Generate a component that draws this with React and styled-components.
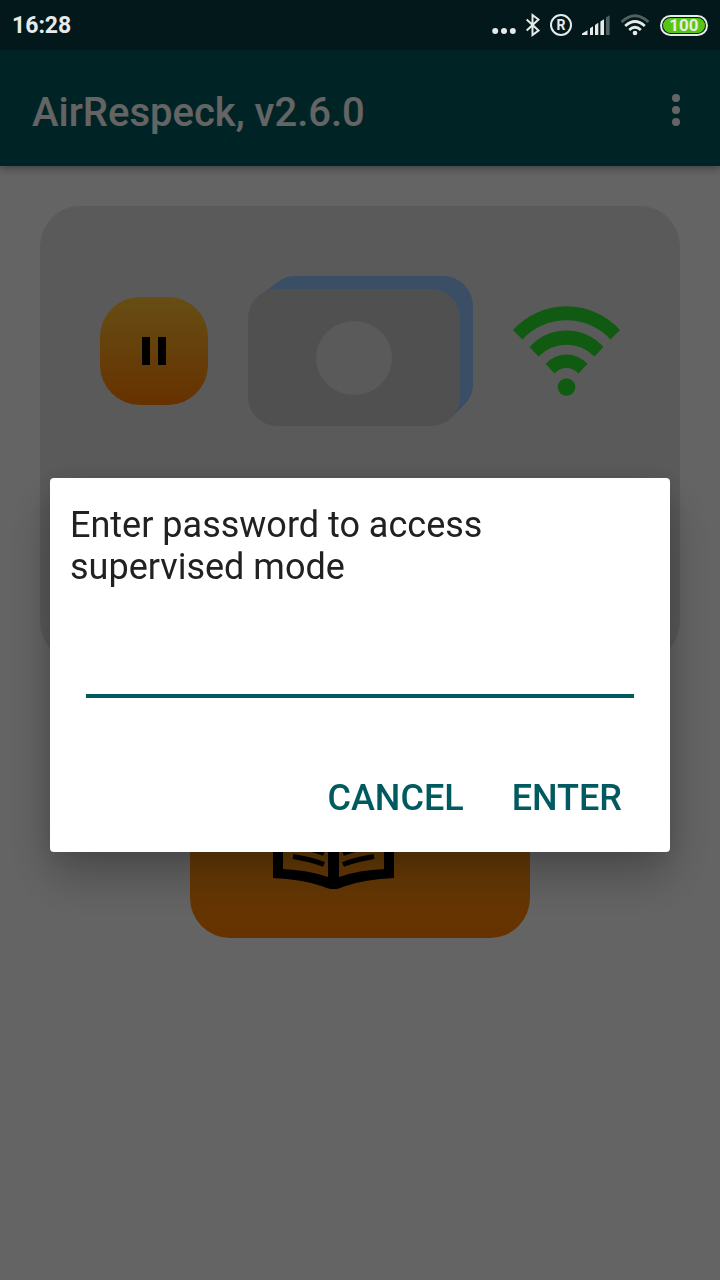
import React from "react";
import styled, { createGlobalStyle } from "styled-components";

const GlobalStyle = createGlobalStyle`
  *, *::before, *::after { box-sizing: border-box; }
  html, body { margin: 0; padding: 0; }
  body { background: #fafafa; font-family: Roboto, sans-serif; }
  button { font-family: inherit; border: 0; padding: 0; cursor: pointer; }
  svg { display: block; flex: none; }
`;

const Page = styled.div`
  min-height: 100vh;
  display: flex;
  flex-direction: column;
  background: #fafafa;
`;

const StatusBar = styled.div`
  position: relative;
  z-index: 3;
  height: 50px;
  padding: 0 12px;
  display: flex;
  align-items: center;
  justify-content: space-between;
  background: #02181a;
  color: #e6eaea;
`;

const Clock = styled.span`
  font-size: 23px;
  line-height: 28px;
  font-weight: 700;
  padding-top: 2px;
`;

const StatusIcons = styled.div`
  display: flex;
  align-items: center;
  gap: 10px;
`;

const Roaming = styled.span`
  width: 22px;
  height: 22px;
  border: 2px solid #e6eaea;
  border-radius: 50%;
  display: flex;
  align-items: center;
  justify-content: center;
  font-size: 14px;
  line-height: 18px;
  font-weight: 700;
`;

const Battery = styled.span`
  width: 48px;
  height: 21px;
  border: 2px solid #e6eaea;
  border-radius: 11px;
  padding: 1px;
  display: flex;
`;

const BatteryLevel = styled.span`
  flex: 1;
  border-radius: 8px;
  background: #56c614;
  display: flex;
  align-items: center;
  justify-content: center;
  font-size: 17px;
  line-height: 15px;
  font-weight: 700;
`;

const AppBar = styled.header`
  height: 116px;
  padding: 0 32px;
  display: flex;
  align-items: center;
  justify-content: space-between;
  background: #005a60;
  color: #fafafa;
  box-shadow: 0 2px 8px rgba(0, 0, 0, 0.4);
`;

const AppTitle = styled.h1`
  margin: 0;
  padding-top: 10px;
  font-size: 40px;
  line-height: 48px;
  font-weight: 500;
`;

const MenuButton = styled.button`
  width: 24px;
  height: 48px;
  display: flex;
  flex-direction: column;
  align-items: center;
  justify-content: center;
  background: none;
  gap: 4px;
  && { padding-top: 4px; }
`;

const MenuDot = styled.span`
  width: 8px;
  height: 8px;
  border-radius: 50%;
  background: #fafafa;
`;

const Content = styled.main`
  padding: 40px;
  display: flex;
  flex-direction: column;
  align-items: center;
  gap: 40px;
`;

const Card = styled.section`
  width: 100%;
  min-height: 456px;
  padding: 70px 20px;
  border-radius: 40px;
  background: #e1e1e1;
`;

const DeviceRow = styled.div`
  display: flex;
  align-items: center;
  justify-content: center;
  gap: 40px;
`;

const OrangeButton = styled.button`
  display: flex;
  align-items: center;
  justify-content: center;
  border-radius: 40px;
  background: linear-gradient(#ffc233, #ff7d00);
`;

const PauseButton = styled(OrangeButton)`
  width: 108px;
  height: 108px;
  gap: 8px;
`;

const PauseBar = styled.span`
  width: 8px;
  height: 28px;
  background: #000;
`;

const DiaryButton = styled(OrangeButton)`
  width: 340px;
  height: 236px;
  padding: 0 54px 49px 0;
  align-items: flex-end;
`;

const Scrim = styled.div`
  position: fixed;
  inset: 0;
  z-index: 2;
  padding: 50px 50px 0;
  display: flex;
  align-items: center;
  background: rgba(0, 0, 0, 0.6);
`;

const Dialog = styled.form`
  width: 100%;
  padding: 26px 20px 18px;
  display: flex;
  flex-direction: column;
  border-radius: 4px;
  background: #fff;
  box-shadow: 0 24px 48px rgba(0, 0, 0, 0.26), 0 4px 24px rgba(0, 0, 0, 0.12);
`;

const DialogTitle = styled.label`
  font-size: 36px;
  line-height: 42px;
  color: #212121;
`;

const PasswordInput = styled.input`
  height: 70px;
  margin: 40px 16px 0;
  padding: 0;
  border: 0;
  border-bottom: 4px solid #005a60;
  border-radius: 0;
  outline: none;
  background: transparent;
  font-family: inherit;
  font-size: 36px;
  color: #212121;
`;

const Actions = styled.div`
  margin-top: 64px;
  display: flex;
  justify-content: flex-end;
  gap: 16px;
  padding-right: 12px;
`;

const ActionButton = styled.button`
  height: 72px;
  && { padding: 0 16px; }
  background: none;
  color: #005a60;
  font-size: 36px;
  line-height: 42px;
  font-weight: 500;
`;

const MoreIcon = () => (
  <svg width="24" height="22" viewBox="0 0 24 22" fill="#e6eaea">
    <circle cx="3.200" cy="17" r="3" />
    <circle cx="12" cy="17" r="3" />
    <circle cx="20.800" cy="17" r="3" />
  </svg>
);

const BluetoothIcon = () => (
  <svg width="14" height="24" viewBox="0 0 14 24" fill="none" stroke="#e6eaea" strokeWidth="2">
    <path d="M0.700 6.500 L12.500 17.500 L6.500 22 V2 L12.500 6.500 L0.700 17.500" />
  </svg>
);

const SignalIcon = () => (
  <svg width="28" height="20" viewBox="0 0 28 20" fill="#e6eaea">
    <path d="M0 20 V18.500 L5.500 15.200 V20Z" />
    <path d="M8 20 V13.200 L11 11.200 V20Z" />
    <path d="M13 20 V10 L16.300 7.800 V20Z" />
    <path d="M18.400 20 V6.600 L22 4.200 V20Z" />
    <path d="M24 20 V2.600 L27.600 0.200 V20Z" opacity="0.35" />
  </svg>
);

const WifiStatusIcon = () => (
  <svg width="30" height="22" viewBox="0 0 30 22" fill="none" stroke="#e6eaea" strokeWidth="2.800">
    <path d="M1.500 8 Q15 -4.600 28.500 8" opacity="0.35" />
    <path d="M5.200 12 Q15 3 24.800 12" />
    <path d="M9.200 16 Q15 10.600 20.800 16" />
    <circle cx="15" cy="19" r="2.300" fill="#e6eaea" stroke="none" />
  </svg>
);

const DeviceIcon = () => (
  <svg width="225" height="150" viewBox="0 0 225 150">
    <path
      d="M11 20 L33.700 3.300 Q39 0 45 0 H195 A30 30 0 0 1 225 30 V109 Q225 120 217 128 L199 146 L180 120 L40 40Z"
      fill="#91c5ff"
    />
    <rect x="0" y="13" width="212" height="137" rx="29" fill="#c8c8c8" />
    <ellipse cx="106" cy="82" rx="38" ry="37" fill="#e1e1e1" />
  </svg>
);

const WifiIcon = () => (
  <svg width="107" height="90" viewBox="0 0 107 90" fill="#2be22b">
    <path d="M0 24 A72 72 0 0 1 107 24 L97.500 33.500 A60 60 0 0 0 9.500 33.500Z" />
    <path d="M16.500 41 A49.500 49.500 0 0 1 90.500 41 L81.500 50.500 A39 39 0 0 0 25.500 50.500Z" />
    <path d="M32.500 57.700 A28.500 28.500 0 0 1 74.500 57.700 L65.500 67.500 A16 16 0 0 0 41.500 67.500Z" />
    <circle cx="53.500" cy="81" r="8.800" />
  </svg>
);

const BookIcon = () => (
  <svg width="121" height="108" viewBox="0 0 121 108">
    <path
      fillRule="evenodd"
      d="M0 0 Q36 1 60.500 12 Q85 1 121 0 V97 Q92 98 71 105.500 Q60.500 111 50 105.500 Q29 98 0 97Z
         M10 10 V88 Q35 89 55 96 V21 Q35 12 10 10Z
         M111 10 Q86 12 66 21 V96 Q86 89 111 88Z"
    />
    {[32, 43, 54, 65, 76].map((y) => (
      <g key={y} fill="none" stroke="#000" strokeWidth="5">
        <path d={`M20 ${y - 0.5} Q37 ${y + 2} 51 ${y + 7.5}`} />
        <path d={`M101 ${y - 0.5} Q84 ${y + 2} 70 ${y + 7.5}`} />
      </g>
    ))}
  </svg>
);

export default function App() {
  return (
    <Page>
      <GlobalStyle />
      <StatusBar>
        <Clock>16:28</Clock>
        <StatusIcons>
          <MoreIcon />
          <BluetoothIcon />
          <Roaming>R</Roaming>
          <SignalIcon />
          <WifiStatusIcon />
          <Battery>
            <BatteryLevel>100</BatteryLevel>
          </Battery>
        </StatusIcons>
      </StatusBar>
      <AppBar>
        <AppTitle>AirRespeck, v2.6.0</AppTitle>
        <MenuButton type="button" aria-label="More options">
          <MenuDot />
          <MenuDot />
          <MenuDot />
        </MenuButton>
      </AppBar>
      <Content>
        <Card>
          <DeviceRow>
            <PauseButton type="button" aria-label="Pause">
              <PauseBar />
              <PauseBar />
            </PauseButton>
            <DeviceIcon />
            <WifiIcon />
          </DeviceRow>
        </Card>
        <DiaryButton type="button" aria-label="Diary">
          <BookIcon />
        </DiaryButton>
      </Content>
      <Scrim>
        <Dialog role="dialog" aria-modal="true" onSubmit={(e) => e.preventDefault()}>
          <DialogTitle htmlFor="password">Enter password to access supervised mode</DialogTitle>
          <PasswordInput id="password" type="password" autoComplete="off" />
          <Actions>
            <ActionButton type="button">CANCEL</ActionButton>
            <ActionButton type="submit">ENTER</ActionButton>
          </Actions>
        </Dialog>
      </Scrim>
    </Page>
  );
}
